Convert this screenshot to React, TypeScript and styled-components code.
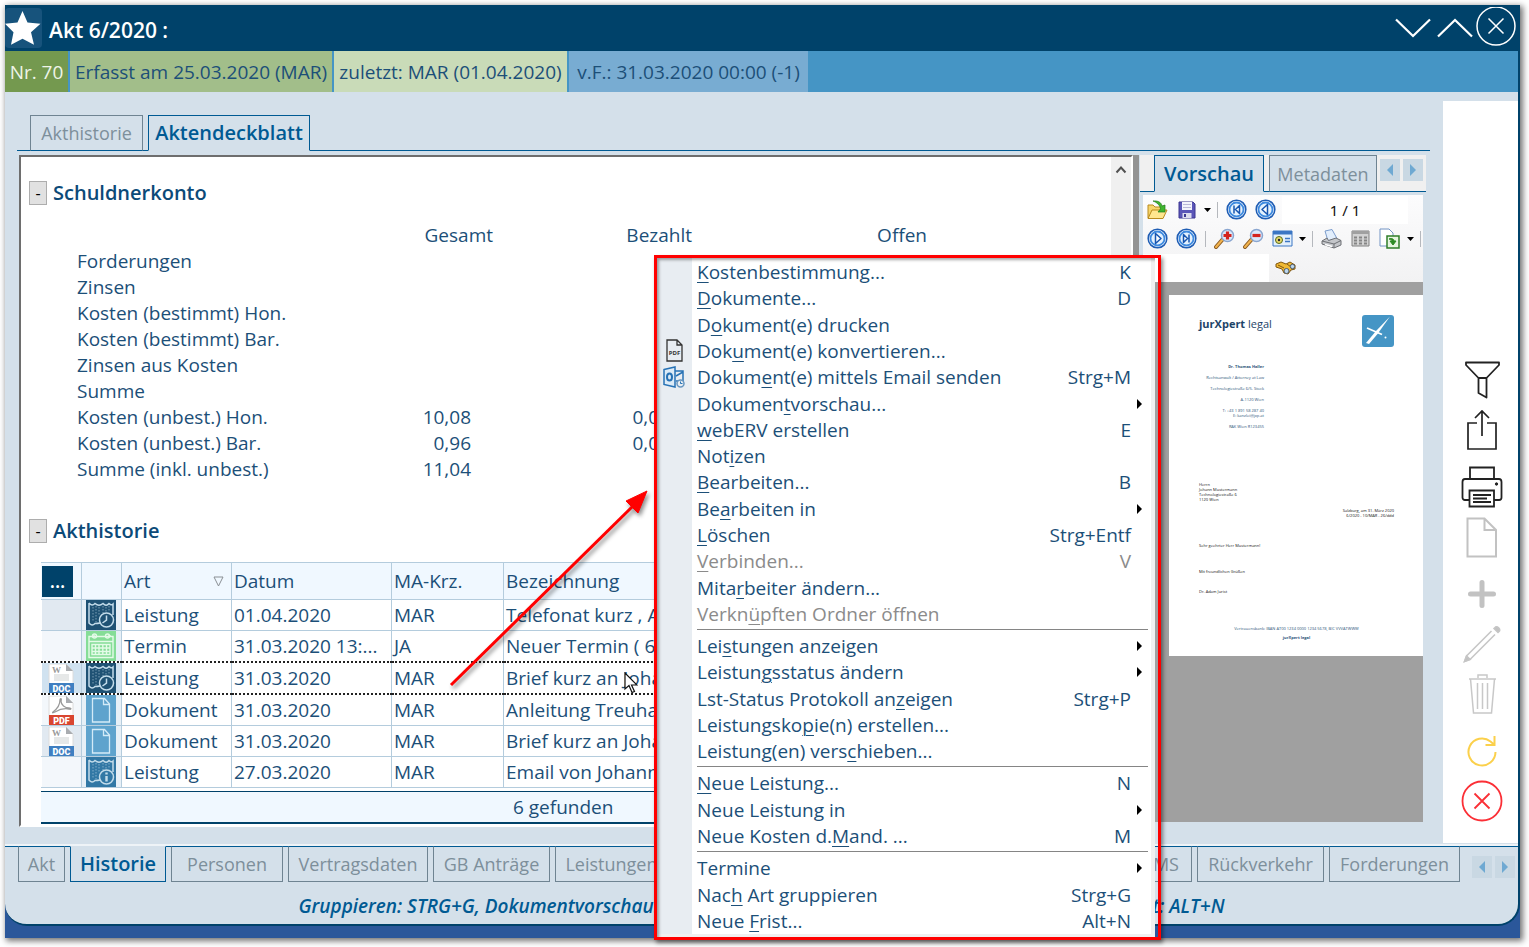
import React from 'react';
import styled, { createGlobalStyle, css } from 'styled-components';

const c = {
  navy: '#00426a',
  blue: '#4595c5',
  pale: '#d4e0ea',
  text: '#1c4f78',
  active: '#005a93',
  muted: '#7d8f9b',
  line: '#b4ccdd',
  header: '#f0f8ff',
};

const Global = createGlobalStyle`
  *, *::before, *::after { box-sizing: border-box; }
  body { margin: 0; background: #fff; font-family: "Open Sans", "Noto Sans", sans-serif; font-size: 19px; color: ${c.text}; }
  button, input { font: inherit; color: inherit; margin: 0; padding: 0; border: 0; background: none; }
  svg { display: block; }
`;

const Desktop = styled.div`
  min-height: 100vh;
  padding: 5px 9px 9px 5px;
  display: flex;
`;
const Shell = styled.div`
  position: relative;
  flex: 1;
  min-width: 0;
  display: flex;
  padding-bottom: 12px;
  background: #2b579a;
  box-shadow: 2px 2px 6px 1px rgba(0, 0, 0, 0.55);
`;
const Window = styled.div`
  flex: 1;
  min-width: 0;
  display: flex;
  flex-direction: column;
  background: ${c.pale};
  border: solid ${c.navy};
  border-width: 0 2px 2px 0;
  border-radius: 0 0 22px 22px;
`;
const TitleBar = styled.header`
  height: 46px;
  display: flex;
  align-items: center;
  background: ${c.navy};
  color: #fff;
`;
const StarBox = styled.div`
  width: 37px;
  height: 40px;
  margin-right: 7px;
  border-radius: 4px;
  background: #17537c;
`;
const Title = styled.h1`
  flex: 1;
  margin: 0;
  padding-top: 4px;
  font-size: 21px;
  line-height: 26px;
  font-weight: 600;
`;
const WindowButton = styled.button`
  width: 42px;
  height: 42px;
  display: grid;
  place-items: center;
`;
const StatusBar = styled.div`
  height: 41px;
  display: flex;
  gap: 2px;
  background: ${c.blue};
`;
const Status = styled.div<{ $bg: string; $w: number; $fg?: string }>`
  width: ${(p) => p.$w}px;
  display: flex;
  align-items: center;
  justify-content: center;
  white-space: nowrap;
  background: ${(p) => p.$bg};
  color: ${(p) => p.$fg || c.text};
`;
const Body = styled.div`
  flex: 1;
  min-height: 0;
  display: flex;
`;
const Main = styled.main`
  flex: 1;
  min-width: 0;
  display: flex;
  flex-direction: column;
  padding: 23px 13px 18px 12px;
`;
const Tabs = styled.div`
  display: flex;
  align-items: stretch;
  height: 36px;
  padding-left: 13px;
  gap: 5px;
  box-shadow: inset 0 -1px 0 ${c.active};
`;
const Tab = styled.button<{ $w: number; $active?: boolean; $bottom?: boolean }>`
  width: ${(p) => p.$w}px;
  flex: none;
  white-space: nowrap;
  font-size: 18px;
  line-height: 26px;
  border: 1px solid #6f8492;
  color: ${c.muted};
  background: ${c.pale};
  ${(p) => (p.$bottom ? 'border-top-color' : 'border-bottom-color')}: ${c.active};
  ${(p) =>
    p.$active &&
    css`
      font-size: 20px;
      font-weight: 600;
      color: ${c.active};
      border-color: ${c.active};
      ${p.$bottom ? 'border-top-color' : 'border-bottom-color'}: ${c.pale};
    `}
`;
const Split = styled.div`
  flex: 1;
  display: flex;
  min-height: 0;
  margin-top: 4px;
`;
const Sheet = styled.section`
  flex: 1;
  min-width: 0;
  display: flex;
  margin-left: 2px;
  background: #fff;
  border: 2px solid #6e6e6e;
  border-right-color: #fff;
  border-bottom-color: #fff;
`;
const SheetContent = styled.div`
  flex: 1;
  min-width: 0;
  padding: 22px 0 0 8px;
`;
const ScrollBar = styled.div`
  width: 20px;
  background: #f0f0f0;
  padding: 8px 4px;
`;
const Splitter = styled.div`
  width: 6px;
  background: #939393;
`;
const SectionHead = styled.div`
  display: flex;
  align-items: center;
  gap: 6px;
  height: 28px;
`;
const Toggle = styled.button`
  width: 18px;
  height: 24px;
  border: 1px solid #adadad;
  background: #e1e1e1;
  color: #000;
  font-size: 16px;
  line-height: 20px;
`;
const SectionTitle = styled.h2`
  margin: 0;
  font-size: 20px;
  line-height: 26px;
  font-weight: 600;
  color: #0c4a78;
`;
const Accounts = styled.table`
  table-layout: fixed;
  width: 850px;
  margin: 15px 0 35px 48px;
  border-collapse: collapse;
  th, td { height: 26px; padding: 0; line-height: 26px; font-weight: 400; text-align: right; white-space: nowrap; }
  td { padding-right: 22px; }
  th:first-child { text-align: left; }
`;
const History = styled.table`
  table-layout: fixed;
  width: 1040px;
  margin: 17px 0 3px 12px;
  border-collapse: collapse;
  th, td {
    height: 31px;
    padding: 0 2px;
    border: 1px solid ${c.line};
    line-height: 26px;
    font-weight: 400;
    text-align: left;
    white-space: nowrap;
    overflow: hidden;
    text-overflow: ellipsis;
  }
  th { height: 37px; background: ${c.header}; }
  th:first-child { border-left-color: ${c.header}; padding: 0; }
  td:first-child { border-left-color: #fff; padding: 0 6px; background: #f3f7fb; }
  td:nth-child(2) { padding: 0 4px; background: #e7f0f7; }
  tbody tr:nth-child(odd) td:first-child { background: #e1e9f1; }
`;
const HistoryRow = styled.tr<{ $focus?: boolean }>`
  ${(p) =>
    p.$focus &&
    css`
      td { border-top: 2px dotted #222; border-bottom: 2px dotted #222; }
      td:nth-child(-n + 2) { background: #d0e2f0 !important; }
    `}
`;
const MoreButton = styled.button`
  width: 31px;
  height: 31px;
  display: block;
  background: ${c.navy};
  color: #fff;
  font-weight: 600;
`;
const HeadCell = styled.div`
  display: flex;
  align-items: center;
  justify-content: space-between;
  padding-right: 5px;
`;
const Found = styled.div`
  width: 1040px;
  max-width: 100%;
  height: 33px;
  margin-left: 12px;
  border: solid ${c.navy};
  border-width: 1px 0 2px;
  background: ${c.header};
  line-height: 30px;
  padding-left: 472px;
`;
const Preview = styled.aside`
  width: 291px;
  display: flex;
  flex-direction: column;
  padding: 0 7px 5px 1px;
`;
const PreviewTabs = styled(Tabs)`
  padding-left: 14px;
  margin-right: -3px;
  height: 37px;
  background: #f0f0f0;
`;
const Scroller = styled.div`
  display: flex;
  gap: 3px;
  padding-top: 4px;
  margin-left: -2px;
`;
const ScrollerButton = styled.button`
  width: 20px;
  height: 22px;
  display: grid;
  place-items: center;
  background: #c9d8e3;
`;
const Toolbar = styled.div`
  margin: 3px 0 0 3px;
  height: 87px;
  background: linear-gradient(#fcfcfd, #f2f2f3);
`;
const ToolRow = styled.div`
  height: 29px;
  display: flex;
  align-items: center;
  gap: 4px;
  padding-left: 2px;
`;
const Tool = styled.button`
  width: 25px;
  height: 24px;
  display: grid;
  place-items: center;
`;
const CaretTool = styled.button`
  width: 8px;
  height: 24px;
  display: grid;
  place-items: center;
`;
const ToolSep = styled.i`
  width: 1px;
  height: 16px;
  margin: 0 2px;
  background: #b5b8bd;
`;
const PageField = styled.input`
  width: 126px;
  height: 28px;
  background: #fff;
  color: #111;
  font-family: "Noto Sans", sans-serif;
  font-size: 15px;
  text-align: center;
`;
const SearchField = styled.input`
  width: 126px;
  height: 28px;
  margin-left: -2px;
  background: #fff;
`;
const Canvas = styled.div`
  flex: 1;
  padding: 13px 0 0 29px;
  background: #a0a0a0;
`;
const Letter = styled.article`
  height: 361px;
  padding: 20px 29px 0 30px;
  background: #fff;
  color: #111;
  font-size: 4px;
  line-height: 5px;
  p { margin: 0; white-space: nowrap; }
`;
const LetterHead = styled.div`
  display: flex;
  justify-content: space-between;
`;
const Brand = styled.div`
  font-size: 11px;
  line-height: 18px;
  color: #1d4468;
`;
const Sender = styled.div`
  width: 65px;
  margin-top: 17px;
  text-align: right;
  color: #2c5479;
  p { margin-bottom: 6px; }
`;
const Block = styled.div<{ $top: number; $align?: string }>`
  margin-top: ${(p) => p.$top}px;
  text-align: ${(p) => p.$align || 'left'};
`;
const LetterFoot = styled.div`
  margin-top: 30px;
  text-align: center;
  line-height: 9px;
  color: #2c5479;
`;
const Sidebar = styled.nav`
  width: 75px;
  margin: 9px 0 2px;
  padding-bottom: 17px;
  display: flex;
  flex-direction: column;
  justify-content: flex-end;
  align-items: center;
  background: #fff;
`;
const SideButton = styled.button<{ $group?: boolean }>`
  width: 50px;
  height: 50px;
  margin-top: ${(p) => (p.$group ? 7 : 0)}px;
  padding-left: 3px;
  display: grid;
  place-items: center;
`;
const BottomTabs = styled.div`
  display: flex;
  height: 36px;
  gap: 5px;
  margin-top: 1px;
  padding: 0 3px 0 13px;
  box-shadow: inset 0 1px 0 ${c.active}, 0 -2px 0 #eef3f7;
`;
const BottomScroller = styled.div`
  display: flex;
  gap: 3px;
  padding-top: 10px;
  margin-left: 7px;
`;
const Grow = styled.span`
  flex: 1;
`;
const Hint = styled.footer`
  display: flex;
  justify-content: space-between;
  width: 926px;
  margin: 0 auto;
  height: 42px;
  padding-top: 11px;
  line-height: 26px;
  font-style: italic;
  font-weight: 600;
  color: ${c.active};
`;

const MenuFrame = styled.div`
  position: absolute;
  left: 649px;
  top: 250px;
  width: 507px;
  height: 685px;
  padding-right: 3px;
  border: 3px solid #f00;
  box-shadow: 2px 3px 4px rgba(0, 0, 0, 0.45);
`;
const Menu = styled.div`
  height: 100%;
  display: flex;
  flex-direction: column;
  padding: 1px 0 3px;
  background: linear-gradient(90deg, #e8edf2 35px, #fff 35px);
  box-shadow: inset 3px 3px 3px -1px rgba(0, 0, 0, 0.35), inset -4px -3px 0 #f0f0f0;
`;
const MenuItem = styled.button<{ $off?: boolean }>`
  flex: 1;
  min-height: 0;
  display: flex;
  align-items: center;
  padding-right: 24px;
  line-height: 26px;
  text-align: left;
  white-space: nowrap;
  color: ${(p) => (p.$off ? '#8b8b8b' : c.text)};
  u { text-decoration-thickness: 1px; text-underline-offset: 3px; }
`;
const MenuIcon = styled.span`
  width: 34px;
  margin-right: 6px;
  display: grid;
  place-items: center;
`;
const MenuLabel = styled.span`
  flex: 1;
`;
const SubArrow = styled.span`
  margin-right: -12px;
`;
const MenuSep = styled.hr`
  width: 451px;
  height: 1px;
  margin: 2px 0 3px 40px;
  border: 0;
  background: #858585;
`;
const ArrowNote = styled.svg`
  position: absolute;
  left: 440px;
  top: 480px;
  pointer-events: none;
  filter: drop-shadow(2px 3px 2px rgba(0, 0, 0, 0.45));
`;
const Pointer = styled.svg`
  position: absolute;
  left: 619px;
  top: 667px;
  pointer-events: none;
`;

const Triangle = ({ dir, color = '#6fa9d2' }: { dir: 'left' | 'right'; color?: string }) => (
  <svg width="8" height="12" viewBox="0 0 8 12">
    <path d={dir === 'left' ? 'M7 0v12L1 6z' : 'M1 0v12l6-6z'} fill={color} />
  </svg>
);
const SubTriangle = () => (
  <svg width="7" height="10" viewBox="0 0 7 10"><path d="M1 0v10l5-5z" fill="#000" /></svg>
);
const Caret = () => (
  <svg width="7" height="4" viewBox="0 0 7 4"><path d="M0 0h7L3.500 4z" fill="#000" /></svg>
);

const NavIcon = ({ kind }: { kind: 'first' | 'prev' | 'next' | 'last' }) => {
  const shapes = {
    first: <path d="M8 6.500v8M13.500 6.500v8l-4-4z" />,
    prev: <path d="M12.500 5.500v10l-5.500-5z" />,
    next: <path d="M8.500 5.500v10l5.500-5z" />,
    last: <path d="M13 6.500v8M7.500 6.500v8l4-4z" />,
  };
  return (
    <svg width="21" height="21" viewBox="0 0 21 21">
      <circle cx="10.500" cy="10.500" r="9.300" fill="#fff" stroke="#1f5db4" strokeWidth="1.600" />
      <circle cx="10.500" cy="10.500" r="7" fill="#e4f1fd" stroke="#3f8be0" strokeWidth="1.800" />
      <g fill="#fff" stroke="#1655b0" strokeWidth="1.500" strokeLinejoin="round">{shapes[kind]}</g>
    </svg>
  );
};
const FolderIcon = () => (
  <svg width="21" height="20" viewBox="0 0 21 20">
    <path d="M1 18V5h5l2 2h7v3" fill="#f6d56b" stroke="#b98a1d" />
    <path d="M1 18.500 5 10h15l-4 8.500z" fill="#ffe68f" stroke="#b98a1d" />
    <path d="M6 1c5-.5 8.500 1.500 9 5l3-1v7h-7l2.500-3C13 5 10 2.500 6 1z" fill="#3fb52f" stroke="#21781a" strokeWidth=".7" />
  </svg>
);
const SaveIcon = () => (
  <svg width="18" height="18" viewBox="0 0 18 18">
    <path d="M1 1h14l2 2v14H1z" fill="#5a55b8" stroke="#3c3791" />
    <path d="M4 1h10v8H4z" fill="#f3f3fb" />
    <path d="M5 3.500h8M5 6.500h8" stroke="#b9b8d8" />
    <path d="M4.500 12h9v5h-9z" fill="#dcdcee" />
    <path d="M6 13h2v3H6z" fill="#3c3791" />
  </svg>
);
const LensIcon = ({ plus }: { plus?: boolean }) => (
  <svg width="21" height="21" viewBox="0 0 21 21">
    <path d="m2 19 7-8" stroke="#8a5a20" strokeWidth="4" strokeLinecap="round" />
    <path d="m2 19 7-8" stroke="#f2b34e" strokeWidth="2" strokeLinecap="round" />
    <circle cx="13.500" cy="7.500" r="6" fill="#dbe9fa" stroke="#8aa6d0" strokeWidth="1.500" />
    <path d={plus ? 'M9.500 7.500h8M13.500 3.500v8' : 'M9.500 7.500h8'} stroke="#d4231d" strokeWidth="3.200" />
  </svg>
);
const ViewIcon = () => (
  <svg width="21" height="17" viewBox="0 0 21 17">
    <path d="M1 1h19v15H1z" fill="#e4f0fb" stroke="#3b76c4" />
    <path d="M1 1h19v3.500H1z" fill="#3b76c4" />
    <circle cx="7" cy="10" r="3.500" fill="#e7d86a" stroke="#566b1d" />
    <circle cx="7" cy="10" r="1.200" fill="#223" />
    <path d="M13 8.500h5M13 11.500h5" stroke="#3b76c4" strokeWidth="1.500" />
  </svg>
);
const SmallPrinter = () => (
  <svg width="21" height="20" viewBox="0 0 21 20">
    <path d="m4 2 7-1.500 5 9-9 2.500z" fill="#e2eefc" stroke="#7b9ccc" />
    <path d="m1 12 5-3 1.500 2.500L15 9l5 2.500v4.500l-7 3-12-4z" fill="#c4c6ca" stroke="#6e7075" />
    <path d="m1 12 12 3 7-3.500M13 15v4" fill="none" stroke="#6e7075" />
    <path d="m4 15.500 7 2" stroke="#fff" strokeWidth="1.500" />
  </svg>
);
const GridIcon = () => (
  <svg width="19" height="17" viewBox="0 0 19 17">
    <path d="M1 1h17v15H1z" fill="#d2d2d2" stroke="#808080" />
    <path d="M1 1h17v3H1z" fill="#a0a0a0" />
    <path d="M3 6.500h3v2H3zM8 6.500h3v2H8zM13 6.500h3v2h-3zM3 9.500h3v2H3zM8 9.500h3v2H8zM13 9.500h3v2h-3zM3 12.500h3v2H3zM8 12.500h3v2H8zM13 12.500h3v2h-3z" fill="#858585" />
  </svg>
);
const ExportIcon = () => (
  <svg width="21" height="21" viewBox="0 0 21 21">
    <path d="M1 1h9l4 4v13H1z" fill="#fff" stroke="#7294c4" />
    <path d="M8 8h12v12H8z" fill="#e6f5e1" stroke="#2f7d28" strokeWidth="1.500" />
    <path d="M10 11c3-1 5 0 5 2h2l-3 4-3-4h2c0-1-1-2-3-2z" fill="#2d8a24" stroke="#2d8a24" />
  </svg>
);
const FindIcon = () => (
  <svg width="21" height="16" viewBox="0 0 21 16">
    <path d="m1 4 5-2 5 2 4-2 5 3v4l-4 1-3 4-4-1-2-4-6-2z" fill="#f0b932" stroke="#80560e" />
    <path d="m3 5 6 3M12 4l4 3" stroke="#80560e" />
    <circle cx="11.500" cy="11" r="2.500" fill="#bcd7ef" stroke="#4d5a68" />
    <circle cx="17.500" cy="6.500" r="2.200" fill="#bcd7ef" stroke="#4d5a68" />
  </svg>
);

const FileBadge = ({ kind }: { kind: 'DOC' | 'PDF' }) => (
  <svg width="27" height="29" viewBox="0 0 27 29">
    <path d="M1 0h17l7 7v21H1z" fill="#fff" stroke="#dcdcdc" />
    <path d="M18 0v7h7z" fill="#a9acb0" />
    {kind === 'DOC' ? (
      <>
        <text x="4" y="9" fontFamily="Liberation Serif, serif" fontSize="9" fontWeight="700" fill="#9a9a9a">W</text>
        <path d="M6 10h15v7H6z" fill="#e6e8e8" />
      </>
    ) : (
      <path d="M5 16c4-3 7-8 7-12 0-2 2-2 1 1 0 4 4 7 8 7 3 0 2 2 0 1-5-1-9 0-14 3-2 1-3 1-2 0z" fill="none" stroke="#9a9a9a" strokeWidth="1.300" />
    )}
    <path d="M1 19h25v10H1z" fill={kind === 'DOC' ? '#3f7fc1' : '#d9452f'} />
    <text x="13.500" y="28" textAnchor="middle" fontFamily="Roboto, sans-serif" fontSize="9" fontWeight="900" fill="#fff">{kind}</text>
  </svg>
);
const TypeIcon = ({ kind }: { kind: string }) => {
  const bg: Record<string, string> = { clock: '#1f5274', cal: '#85dd97', file: '#5ea3cd', info: '#3278a5' };
  return (
    <svg width="30" height="30" viewBox="0 0 30 30">
      <path d="M0 0h30v30H0z" fill={bg[kind]} />
      {kind === 'cal' && (
        <g fill="none" stroke="#e4fbe8" strokeWidth="1.400">
          <path d="M3 5.500h24v21H3zM3 10.500h24M6 5h3M22 5h3" />
          <circle cx="8.500" cy="5" r="2" /><circle cx="21.500" cy="5" r="2" />
          <path d="M6 13.500h18v10H6zM6 17h18M6 20.500h18M9.500 13.500v10M13 13.500v10M16.800 13.500v10M20.500 13.500v10" />
        </g>
      )}
      {kind === 'file' && (
        <path d="M6.500 3.500h12l5 5.500v18h-17zM17.500 3.500v6h6" fill="none" stroke="#d3ebf8" strokeWidth="1.300" />
      )}
      {(kind === 'clock' || kind === 'info') && (
        <g fill="none" stroke="#c3dcea" strokeWidth="1.500">
          <path d="M3 3v20c2 2.500 4 2.500 6 .5 2 0 3 0 5-.5M3 3c2 2.500 4 2.500 6 .5 3 2.500 5 2.500 8 0 2 2 4 2.500 6 0 1.500 1.500 3 1.500 4 .5v11" />
          <path d="M7 7v14M10 6v16M13 7v8M17 6v7M20 7v5M23 6v6" strokeDasharray="1.500 1.500" strokeWidth=".8" opacity=".7" />
          <circle cx="20.500" cy="20" r="7" fill={bg[kind]} />
          {kind === 'clock' ? <path d="M20.500 15.500V20l-4 3" /> : <path d="M20.500 19v5.500M20.500 15.500v2" strokeWidth="2.400" />}
        </g>
      )}
    </svg>
  );
};

const side: [string, boolean, React.ReactNode][] = [
  ['Filter', false, <svg width="37" height="38" viewBox="0 0 37 38" fill="none" stroke="#222" strokeWidth="1.800"><path d="M2 1.500h33v2.500L22.500 17h-8L2 4zM14.500 17v15l8 4.500V17" strokeLinejoin="round" /></svg>],
  ['Teilen', false, <svg width="32" height="42" viewBox="0 0 32 42" fill="none" stroke="#222" strokeWidth="1.700"><path d="M11 14H2v26h28V14h-9M16 27V2M9 9l7-7 7 7" /></svg>],
  ['Drucken', true, <svg width="42" height="42" viewBox="0 0 42 42" fill="none" stroke="#222" strokeWidth="1.800"><path d="M9 13V1.500h24V13M8.500 34H4c-1.500 0-2.500-1-2.500-2.500V16c0-2 1-3 2.500-3h34c1.500 0 2.500 1 2.500 3v15.500c0 1.500-1 2.500-2.500 2.500h-5M8.500 24.500h24.500V40.500H8.500zM12 29h18M12 32.500h14M12 36h18" /><circle cx="35.500" cy="18" r="1.200" fill="#222" strokeWidth="1" /></svg>],
  ['Neues Dokument', false, <svg width="32" height="41" viewBox="0 0 32 41" fill="none" stroke="#c2c2c2" strokeWidth="2"><path d="M1.500 1.500h17L30 13v26.500H1.500zM18.500 1.500V13H30" /></svg>],
  ['Hinzufügen', true, <svg width="28" height="28" viewBox="0 0 28 28"><path d="M14 2.500v23M2.500 14h23" stroke="#c2c2c2" strokeWidth="5" strokeLinecap="round" /></svg>],
  ['Bearbeiten', false, <svg width="38" height="38" viewBox="0 0 38 38" fill="none" stroke="#c5c5c5" strokeWidth="1.500"><path d="M3.500 31 28.500 6M7 34.500 32 9.500M1.500 36.500l2-5.500L7 34.500z" /><path d="m31 3.500 1.500-1.500c2-1 5 2 4 4L35 7.500z" fill="#c2c2c2" /><path d="m1.500 36.500 2-5.500L7 34.500z" fill="#c2c2c2" /></svg>],
  ['Löschen', false, <svg width="29" height="42" viewBox="0 0 29 42" fill="none" stroke="#c8c8c8" strokeWidth="1.500"><path d="M1 6h27M10 5V2h9v3M2.500 6l3 34h18l3-34M9.500 10v26M14.500 10v26M19.500 10v26" /></svg>],
  ['Aktualisieren', true, <svg width="32" height="33" viewBox="0 0 32 33" fill="none" stroke="#fbd04b" strokeWidth="2"><path d="M29.500 17A13.500 13.500 0 1 1 24.500 6.500L28 9.500M28.500 1v9H19.500" /></svg>],
  ['Schließen', false, <svg width="42" height="42" viewBox="0 0 42 42" fill="none" stroke="#fb2f36" strokeWidth="1.800"><circle cx="21" cy="21" r="19.500" /><path d="m13.500 13.500 15 15M28.500 13.500l-15 15" /></svg>],
];

const menu: ([string, string?] | null)[] = [
  ['&Kostenbestimmung...', 'K'],
  ['&Dokumente...', 'D'],
  ['D&okument(e) drucken'],
  ['Dok&ument(e) konvertieren...'],
  ['Dokum&ent(e) mittels Email senden', 'Strg+M'],
  ['Dokumen&tvorschau...', '>'],
  ['&webERV erstellen', 'E'],
  ['Not&izen'],
  ['&Bearbeiten...', 'B'],
  ['Be&arbeiten in', '>'],
  ['&Löschen', 'Strg+Entf'],
  ['&Verbinden...', 'V'],
  ['Mita&rbeiter ändern...'],
  ['Verkn&üpften Ordner öffnen'],
  null,
  ['Lei&stungen anzeigen', '>'],
  ['Leistun&gsstatus ändern', '>'],
  ['Lst-Status Protokoll an&zeigen', 'Strg+P'],
  ['Leistungsko&pie(n) erstellen...'],
  ['Leistung(en) vers&chieben...'],
  null,
  ['&Neue Leistung...', 'N'],
  ['Neue Leistung in', '>'],
  ['Neue Kosten d.&Mand. ...', 'M'],
  null,
  ['Termine', '>'],
  ['Nac&h Art gruppieren', 'Strg+G'],
  ['Neue &Frist...', 'Alt+N'],
];
const disabledItems = [11, 13];
const menuIcons: Record<number, React.ReactNode> = {
  3: (
    <svg width="17" height="23" viewBox="0 0 17 23" fill="none" stroke="#333" strokeWidth="1.300">
      <path d="M1 1h10l5 5v16H1zM11 1v5h5" />
      <text x="8.500" y="16" textAnchor="middle" fontSize="6" fontWeight="700" fill="#333" stroke="none">PDF</text>
    </svg>
  ),
  4: (
    <svg width="22" height="22" viewBox="0 0 22 22" fill="none" stroke="#2672b5" strokeWidth="1.500">
      <path d="M12 5h8v11M13 10l7-4M13 15h2" />
      <path d="M1 3.500 12 1v20L1 18.500z" fill="#dcebf7" />
      <ellipse cx="6.500" cy="11" rx="2.500" ry="3.500" strokeWidth="2" />
      <circle cx="17.500" cy="17.500" r="3.500" fill="#e8edf2" stroke="#6796c0" />
      <path d="M17.500 15.500v2h2" strokeWidth="1" />
    </svg>
  ),
};

const Mnemonic = ({ label }: { label: string }) => {
  const i = label.indexOf('&');
  if (i < 0) return <MenuLabel>{label}</MenuLabel>;
  return (
    <MenuLabel>
      {label.slice(0, i)}<u>{label[i + 1]}</u>{label.slice(i + 2)}
    </MenuLabel>
  );
};

const accounts: string[][] = [
  ['Forderungen', '', ''],
  ['Zinsen', '', ''],
  ['Kosten (bestimmt) Hon.', '', ''],
  ['Kosten (bestimmt) Bar.', '', ''],
  ['Zinsen aus Kosten', '', ''],
  ['Summe', '', ''],
  ['Kosten (unbest.) Hon.', '10,08', '0,00'],
  ['Kosten (unbest.) Bar.', '0,96', '0,00'],
  ['Summe (inkl. unbest.)', '11,04', ''],
];
const history: [string, string, string, string, string, string][] = [
  ['', 'clock', 'Leistung', '01.04.2020', 'MAR', 'Telefonat kurz , A'],
  ['', 'cal', 'Termin', '31.03.2020 13:...', 'JA', 'Neuer Termin ( 6/'],
  ['DOC', 'clock', 'Leistung', '31.03.2020', 'MAR', 'Brief kurz an Joha'],
  ['PDF', 'file', 'Dokument', '31.03.2020', 'MAR', 'Anleitung Treuhan'],
  ['DOC', 'file', 'Dokument', '31.03.2020', 'MAR', 'Brief kurz an Joha'],
  ['', 'info', 'Leistung', '27.03.2020', 'MAR', 'Email von Johann'],
];
const leftTabs: [string, number][] = [
  ['Akt', 47], ['Historie', 96], ['Personen', 112], ['Vertragsdaten', 140], ['GB Anträge', 117], ['Leistungen', 113],
];

const ScrollPair = () => (
  <>
    <ScrollerButton aria-label="Zurück"><Triangle dir="left" /></ScrollerButton>
    <ScrollerButton aria-label="Weiter"><Triangle dir="right" /></ScrollerButton>
  </>
);

export default function App() {
  return (
    <Desktop>
      <Global />
      <Shell>
        <Window>
          <TitleBar>
            <StarBox>
              <svg width="36" height="38" viewBox="0 0 36 38">
                <path d="M17.500 3l5 11.500 13 1.200-9.500 8.500 3 12.500-11.500-6-11.500 6 2.500-12.500L0 15.700l12.500-1.200z" fill="#fff" />
              </svg>
            </StarBox>
            <Title>Akt 6/2020 :</Title>
            <WindowButton aria-label="Minimieren">
              <svg width="36" height="20" viewBox="0 0 36 20"><path d="m1 1.500 17 16.500 17-16.500" fill="none" stroke="#fff" strokeWidth="2.200" /></svg>
            </WindowButton>
            <WindowButton aria-label="Maximieren">
              <svg width="36" height="20" viewBox="0 0 36 20"><path d="m1 18.500 17-16.500 17 16.500" fill="none" stroke="#fff" strokeWidth="2.200" /></svg>
            </WindowButton>
            <WindowButton aria-label="Schließen">
              <svg width="42" height="42" viewBox="0 0 42 42" fill="none" stroke="#fff" strokeWidth="1.500"><circle cx="20" cy="19" r="19" /><path d="m12.500 11.500 15 15M27.500 11.500l-15 15" /></svg>
            </WindowButton>
          </TitleBar>
          <StatusBar>
            <Status $w={63} $bg="#74994f" $fg="#eef4e8">Nr. 70</Status>
            <Status $w={262} $bg="#a2be8a">Erfasst am 25.03.2020 (MAR)</Status>
            <Status $w={233} $bg="#c9dbb8">zuletzt: MAR (01.04.2020)</Status>
            <Status $w={239} $bg="#78acd2">v.F.: 31.03.2020 00:00 (-1)</Status>
          </StatusBar>
          <Body>
            <Main>
              <Tabs role="tablist">
                <Tab $w={113}>Akthistorie</Tab>
                <Tab $w={162} $active>Aktendeckblatt</Tab>
              </Tabs>
              <Split>
                <Sheet>
                  <SheetContent>
                    <SectionHead><Toggle>-</Toggle><SectionTitle>Schuldnerkonto</SectionTitle></SectionHead>
                    <Accounts>
                      <colgroup><col /><col style={{ width: 180 }} /><col style={{ width: 199 }} /><col style={{ width: 235 }} /></colgroup>
                      <thead><tr><th /><th>Gesamt</th><th>Bezahlt</th><th>Offen</th></tr></thead>
                      <tbody>
                        {accounts.map(([label, total, paid]) => (
                          <tr key={label}><th scope="row">{label}</th><td>{total}</td><td>{paid}</td><td /></tr>
                        ))}
                      </tbody>
                    </Accounts>
                    <SectionHead><Toggle>-</Toggle><SectionTitle>Akthistorie</SectionTitle></SectionHead>
                    <History>
                      <colgroup>
                        <col style={{ width: 40 }} /><col style={{ width: 40 }} /><col style={{ width: 110 }} />
                        <col style={{ width: 160 }} /><col style={{ width: 112 }} /><col />
                      </colgroup>
                      <thead>
                        <tr>
                          <th><MoreButton>...</MoreButton></th>
                          <th />
                          <th>
                            <HeadCell>
                              Art
                              <svg width="11" height="11" viewBox="0 0 11 11"><path d="M1 1h9L5.500 10z" fill="none" stroke="#8a8f94" /></svg>
                            </HeadCell>
                          </th>
                          <th>Datum</th><th>MA-Krz.</th><th>Bezeichnung</th>
                        </tr>
                      </thead>
                      <tbody>
                        {history.map(([badge, icon, kind, date, who, name], i) => (
                          <HistoryRow key={i} $focus={i === 2}>
                            <td>{badge && <FileBadge kind={badge as 'DOC' | 'PDF'} />}</td>
                            <td><TypeIcon kind={icon} /></td>
                            <td>{kind}</td><td>{date}</td><td>{who}</td><td>{name}</td>
                          </HistoryRow>
                        ))}
                      </tbody>
                    </History>
                    <Found>6 gefunden</Found>
                  </SheetContent>
                  <ScrollBar>
                    <svg width="12" height="10" viewBox="0 0 12 10"><path d="m1.500 7.500 4.500-5 4.500 5" fill="none" stroke="#505050" strokeWidth="2" /></svg>
                  </ScrollBar>
                </Sheet>
                <Splitter />
                <Preview>
                  <PreviewTabs role="tablist">
                    <Tab $w={110} $active>Vorschau</Tab>
                    <Tab $w={108}>Metadaten</Tab>
                    <Scroller><ScrollPair /></Scroller>
                  </PreviewTabs>
                  <Toolbar>
                    <ToolRow>
                      <Tool aria-label="Öffnen"><FolderIcon /></Tool>
                      <Tool aria-label="Speichern"><SaveIcon /></Tool>
                      <CaretTool aria-label="Speicheroptionen"><Caret /></CaretTool>
                      <ToolSep />
                      <Tool aria-label="Erste Seite"><NavIcon kind="first" /></Tool>
                      <Tool aria-label="Vorige Seite"><NavIcon kind="prev" /></Tool>
                      <PageField aria-label="Seite" defaultValue="1 / 1" />
                    </ToolRow>
                    <ToolRow>
                      <Tool aria-label="Nächste Seite"><NavIcon kind="next" /></Tool>
                      <Tool aria-label="Letzte Seite"><NavIcon kind="last" /></Tool>
                      <ToolSep />
                      <Tool aria-label="Vergrößern"><LensIcon plus /></Tool>
                      <Tool aria-label="Verkleinern"><LensIcon /></Tool>
                      <Tool aria-label="Ansicht"><ViewIcon /></Tool>
                      <CaretTool aria-label="Ansichtsoptionen"><Caret /></CaretTool>
                      <ToolSep />
                      <Tool aria-label="Drucken"><SmallPrinter /></Tool>
                      <Tool aria-label="Raster"><GridIcon /></Tool>
                      <Tool aria-label="Exportieren"><ExportIcon /></Tool>
                      <CaretTool aria-label="Exportoptionen"><Caret /></CaretTool>
                      <ToolSep />
                    </ToolRow>
                    <ToolRow>
                      <SearchField aria-label="Suche" />
                      <Tool aria-label="Suchen"><FindIcon /></Tool>
                    </ToolRow>
                  </Toolbar>
                  <Canvas>
                    <Letter>
                      <LetterHead>
                        <Brand><b>jurXpert</b> legal</Brand>
                        <svg width="32" height="32" viewBox="0 0 32 32">
                          <rect width="32" height="32" rx="3" fill="#4595c5" />
                          <path d="M28 1.500 15.500 19 7 29l-3-1 10-12z" fill="#fff" />
                          <path d="m5 13 15 6.500" stroke="#fff" strokeWidth="1.800" />
                          <circle cx="23.500" cy="22.500" r="1" fill="#fff" />
                        </svg>
                      </LetterHead>
                      <Sender>
                        <p><b>Dr. Thomas Haller</b></p>
                        <p>Rechtsanwalt / Attorney at Law</p>
                        <p>Technologiestraße 6/5. Stock</p>
                        <p>A-1120 Wien</p>
                        <p>T: +43 1 891 58 287 40<br />E: kanzlei@jxp.at</p>
                        <p>RAK Wien R123455</p>
                      </Sender>
                      <Block $top={53}>
                        <p>Herrn</p><p>Johann Mustermann</p><p>Technologiestraße 6</p><p>1120 Wien</p>
                      </Block>
                      <Block $top={6} $align="right">
                        <p>Salzburg, am 31. März 2020</p><p>6/2020 - 10/MAR - 26/ddd</p>
                      </Block>
                      <Block $top={25}><p>Sehr geehrter Herr Mustermann!</p></Block>
                      <Block $top={21}><p>Mit freundlichen Grüßen</p></Block>
                      <Block $top={15}><p>Dr. Adam Jurist</p></Block>
                      <LetterFoot>
                        <p>Vertrauensbank: IBAN AT00 1234 0000 1234 5678, BIC VVVATWWW</p>
                        <p><b>jurXpert legal</b></p>
                      </LetterFoot>
                    </Letter>
                  </Canvas>
                </Preview>
              </Split>
            </Main>
            <Sidebar>
              {side.map(([label, group, icon]) => (
                <SideButton key={label} $group={group} aria-label={label}>{icon}</SideButton>
              ))}
            </Sidebar>
          </Body>
          <BottomTabs role="tablist">
            {leftTabs.map(([label, w]) => (
              <Tab key={label} $w={w} $bottom $active={label === 'Historie'}>{label}</Tab>
            ))}
            <Grow />
            <Tab $w={62} $bottom>SMS</Tab>
            <Tab $w={127} $bottom>Rückverkehr</Tab>
            <Tab $w={131} $bottom>Forderungen</Tab>
            <BottomScroller><ScrollPair /></BottomScroller>
          </BottomTabs>
          <Hint>
            <span>Gruppieren: STRG+G, Dokumentvorschau:</span>
            <span>t: ALT+N</span>
          </Hint>
        </Window>

        <Pointer width="14" height="22" viewBox="0 0 14 22">
          <path d="M1 1v16l4-3.500 3 7 2.500-1-3-6.500H13z" fill="#fff" stroke="#111" strokeWidth="1.200" />
        </Pointer>
        <MenuFrame>
          <Menu role="menu">
            {menu.map((item, i) =>
              item === null ? (
                <MenuSep key={i} />
              ) : (
                <MenuItem key={i} role="menuitem" $off={disabledItems.includes(i)} disabled={disabledItems.includes(i)}>
                  <MenuIcon>{menuIcons[i]}</MenuIcon>
                  <Mnemonic label={item[0]} />
                  {item[1] === '>' ? <SubArrow><SubTriangle /></SubArrow> : item[1]}
                </MenuItem>
              ),
            )}
          </Menu>
        </MenuFrame>
        <ArrowNote width="210" height="210" viewBox="0 0 210 210">
          <path d="M6 200 188 21" stroke="#f00" strokeWidth="3" />
          <path d="m202 6-21 10 12 12z" fill="#f00" stroke="#f00" />
        </ArrowNote>
      </Shell>
    </Desktop>
  );
}
